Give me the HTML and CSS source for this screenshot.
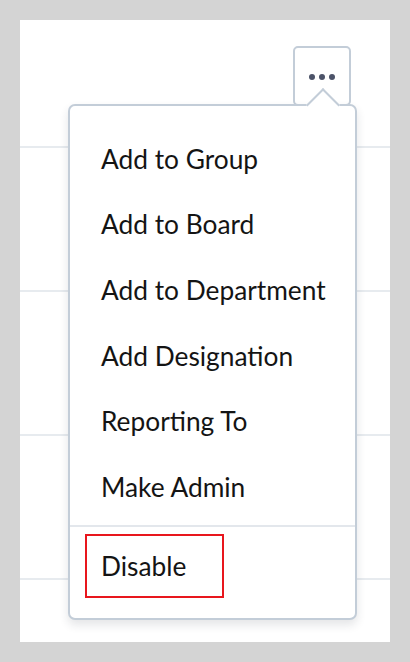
FILE: index.html
```html
<!DOCTYPE html>
<html>
<head>
<meta charset="utf-8">
<link rel="stylesheet" href="styles.css">
</head>
<body>
<div class="panel">
  <div class="row row-first"></div>
  <div class="row"></div>
  <div class="row"></div>
  <div class="row"></div>
  <div class="row row-last"></div>

  <button class="more-btn" aria-label="More">
    <span class="dot"></span><span class="dot"></span><span class="dot"></span>
  </button>

  <div class="menu">
    <ul class="menu-list">
      <li class="menu-item">Add to Group</li>
      <li class="menu-item">Add to Board</li>
      <li class="menu-item">Add to Department</li>
      <li class="menu-item">Add Designation</li>
      <li class="menu-item">Reporting To</li>
      <li class="menu-item">Make Admin</li>
    </ul>
    <div class="menu-footer">
      <div class="menu-item danger-box">Disable</div>
    </div>
  </div>
</div>
</body>
</html>
```

FILE: styles.css
```css
* { box-sizing: border-box; }

html, body {
  margin: 0;
  padding: 0;
}

body {
  background: #d4d4d4;
  padding: 20px;
  font-family: "Lato", "Open Sans", sans-serif;
}

.panel {
  position: relative;
  background: #ffffff;
  height: 622px;
  overflow: hidden;
}

.row {
  height: 144px;
  border-bottom: 2px solid #e7ebef;
}

.row-first {
  height: 128px;
}

.row-last {
  border-bottom: none;
}

.more-btn {
  position: absolute;
  left: 273px;
  top: 26px;
  width: 58px;
  height: 60px;
  border: 2px solid #c3cdd8;
  border-radius: 5px;
  background: #ffffff;
  display: flex;
  justify-content: center;
  gap: 4px;
  padding: 26px 0 0 0;
  margin: 0;
}

.dot {
  width: 6px;
  height: 6px;
  border-radius: 50%;
  background: #4c5369;
  display: block;
}

.menu {
  position: absolute;
  left: 48px;
  top: 84px;
  width: 289px;
  height: 516px;
  background: #ffffff;
  border: 2px solid #c3cdd8;
  border-radius: 7px;
  box-shadow: 0 5px 10px rgba(30, 40, 60, 0.12);
  z-index: 2;
}

.menu::before {
  content: "";
  position: absolute;
  left: 241px;
  top: -13px;
  width: 22px;
  height: 22px;
  background: #ffffff;
  border-top: 2px solid #c3cdd8;
  border-left: 2px solid #c3cdd8;
  transform: rotate(45deg);
}

.menu-list {
  list-style: none;
  margin: 0;
  padding: 20px 0 5px 0;
  border-bottom: 2px solid #e3e7ec;
}

.menu-item {
  height: 65.6px;
  display: flex;
  align-items: center;
  padding-left: 31px;
  font-size: 26.3px;
  color: #141414;
  position: relative;
}

.menu-footer {
  padding: 7px 0 0 15px;
}

.danger-box {
  width: 139px;
  height: 64px;
  border: 2px solid #e8161d;
  padding-left: 14px;
}
```
